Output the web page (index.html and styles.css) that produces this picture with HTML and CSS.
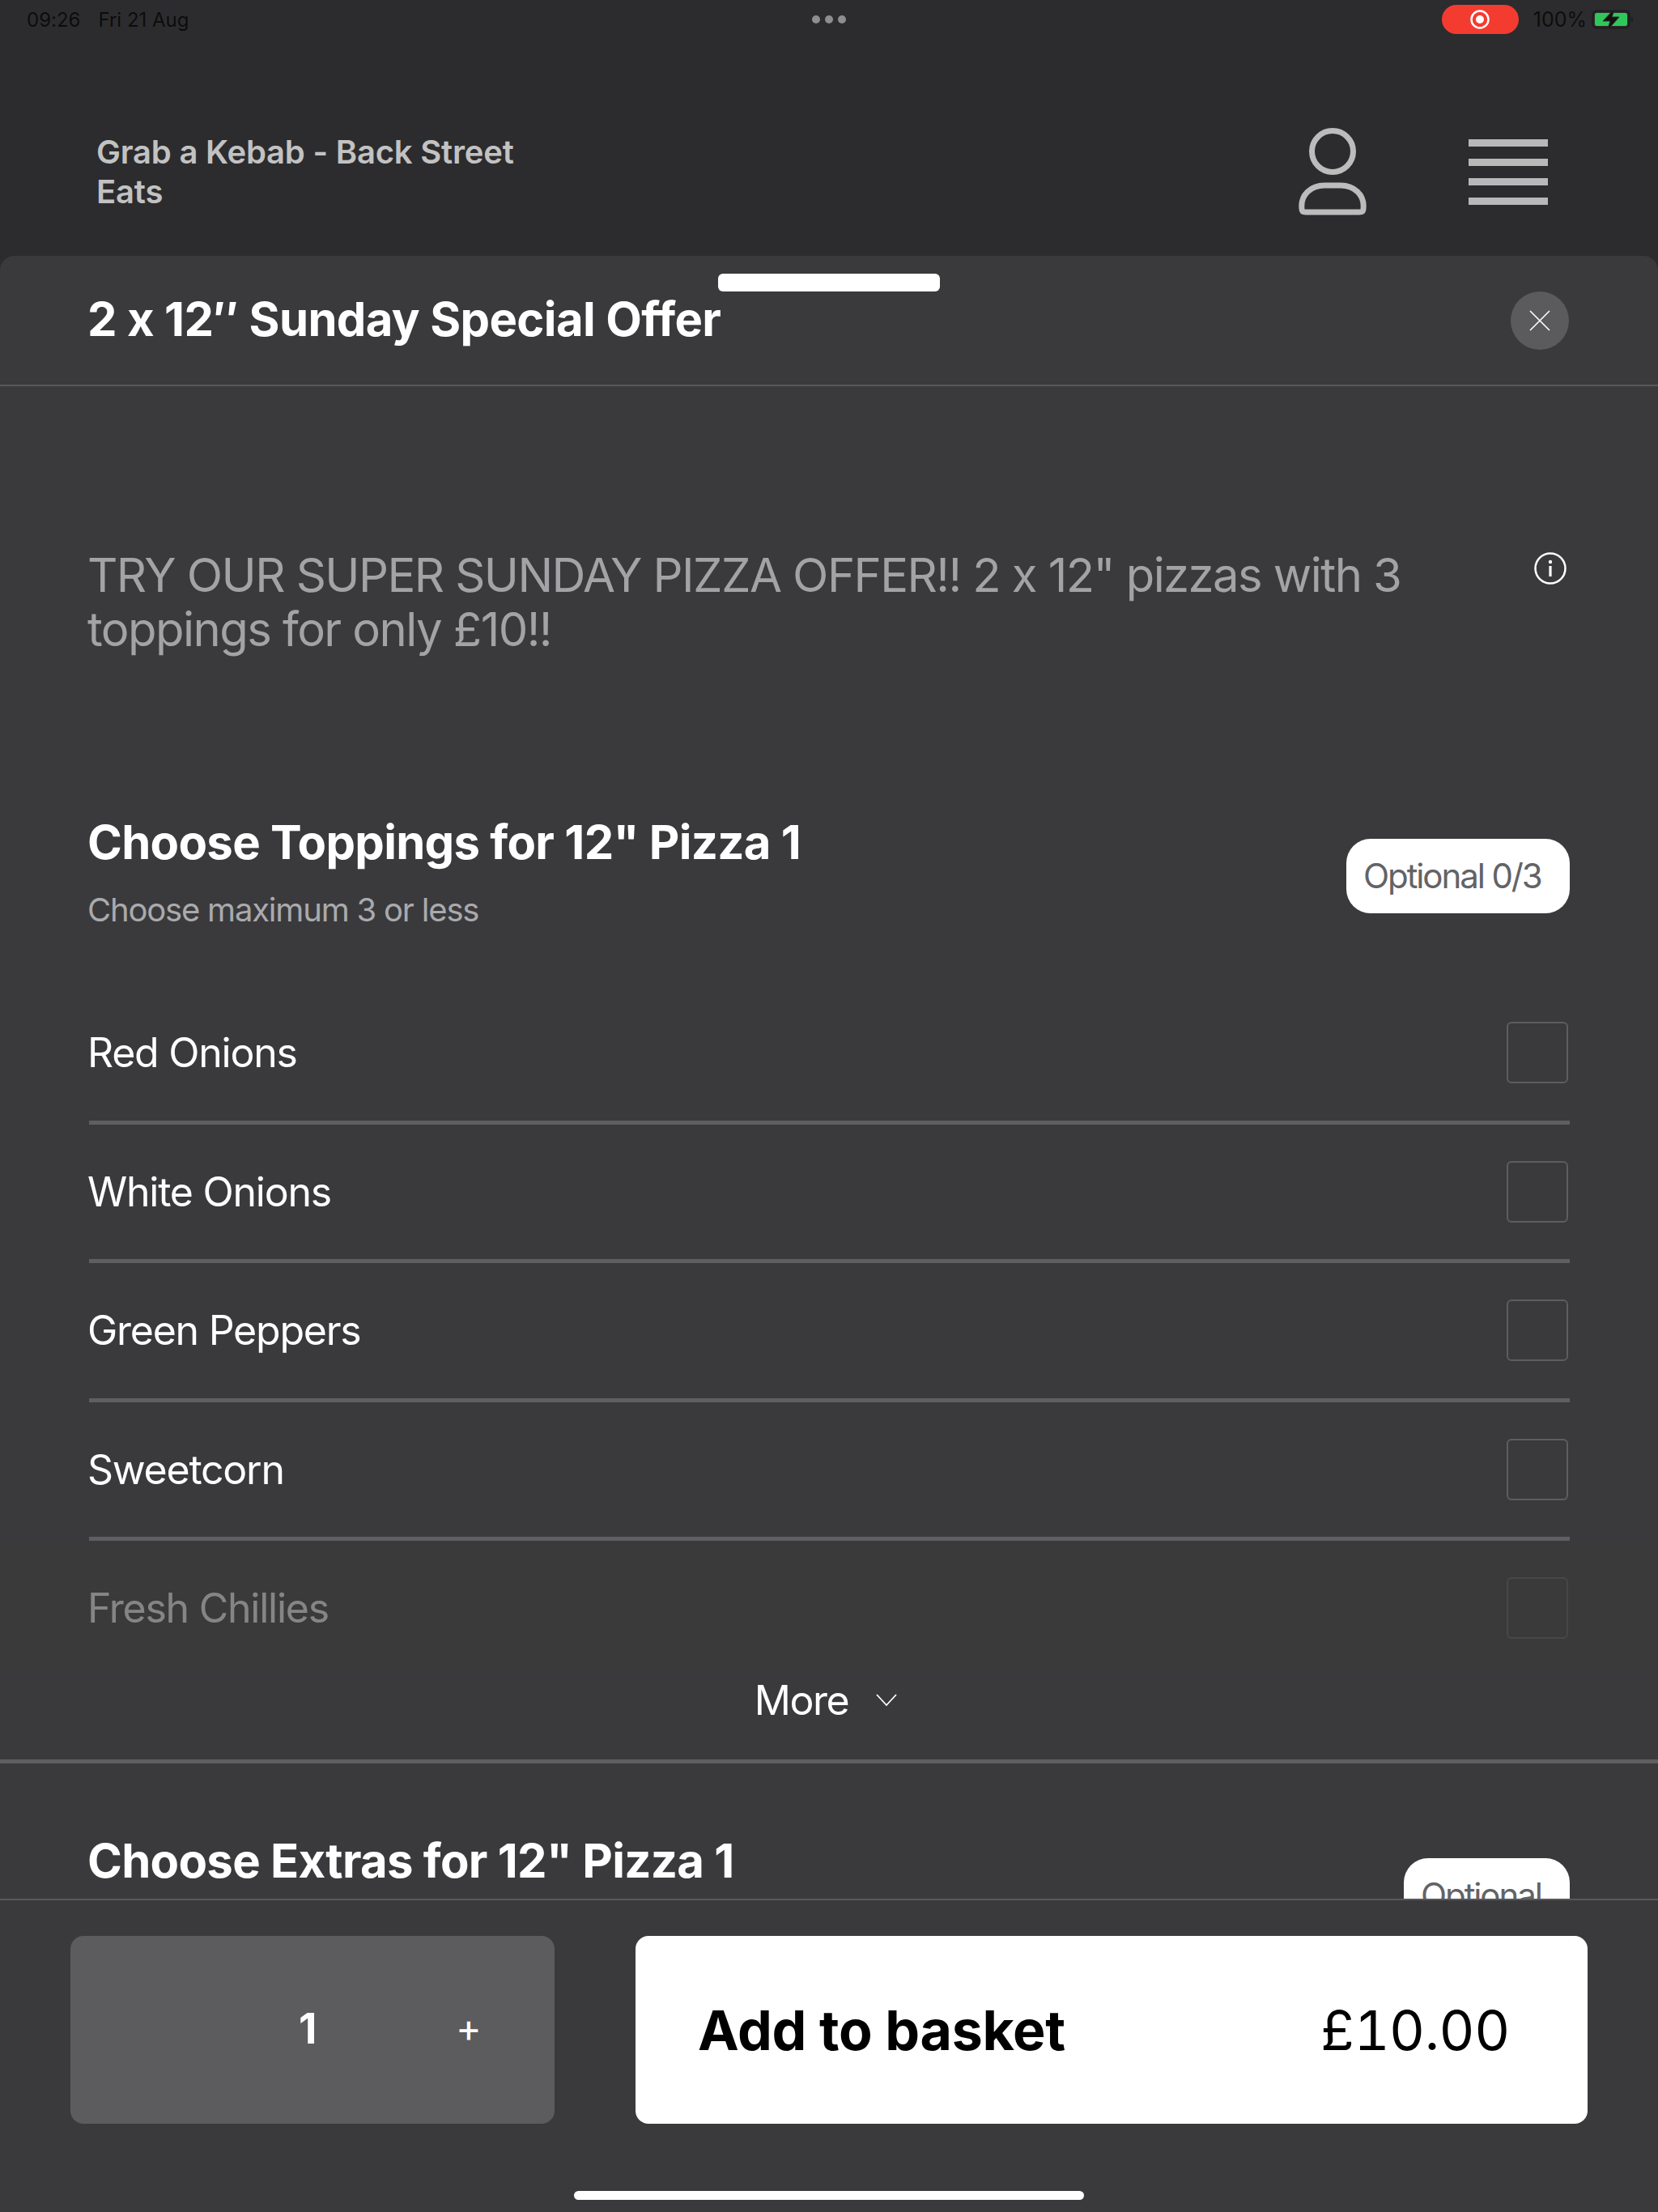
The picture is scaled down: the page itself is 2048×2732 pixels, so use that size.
FILE: index.html
```html
<!DOCTYPE html>
<html lang="en">
<head>
  <meta charset="UTF-8">
  <meta name="viewport" content="width=device-width,initial-scale=1.0">
  <title>2 x 12" Sunday Special Offer</title>
  <link rel="stylesheet" href="styles.css">
</head>
<body>
  <div class="page">
    <div class="statusBar">
      <div class="statusLeft"><span>09:26</span><span>Fri 21 Aug</span></div>
      <div class="statusDots"><i></i><i></i><i></i></div>
      <div class="statusRight">
        <div class="recPill"><svg width="26" height="26" viewBox="0 0 26 26"><circle cx="13" cy="13" r="10.5" fill="none" stroke="#fff" stroke-width="2.5"/><circle cx="13" cy="13" r="5" fill="#fff"/></svg></div>
        <span>100%</span>
        <svg width="54" height="30" viewBox="0 0 54 30"><rect x="1.5" y="4.5" width="45" height="21" rx="5" fill="none" stroke="#1f1f21" stroke-width="2.5"/><rect x="4" y="7" width="40" height="16" rx="2.5" fill="#30c75a"/><rect x="48.5" y="12" width="2.5" height="6" rx="1" fill="#1f1f21"/><path d="M29 1 L14 17 H23 L19 29 L34 12 H25 Z" fill="#111" stroke="#2c2c2e" stroke-width="1"/></svg>
      </div>
    </div>

    <header class="topBar">
      <div class="brand">Grab a Kebab - Back Street<br>Eats</div>
      <svg class="userIcon" width="84" height="108" viewBox="0 0 84 108"><ellipse cx="42" cy="29" rx="25.5" ry="25.5" fill="none" stroke="#bcbcbc" stroke-width="7"/><path d="M4 100 C2 82 16 71 32 71 H52 C68 71 82 82 80 100 C80 103 78 104 75 104 H9 C6 104 4 103 4 100 Z" fill="none" stroke="#bcbcbc" stroke-width="7"/></svg>
      <div class="menuIcon"><i></i><i></i><i></i><i></i></div>
    </header>

    <section class="sheet">
      <div class="grabber"></div>
      <div class="sheetHead">
        <h1>2 x 12&Prime; Sunday Special Offer</h1>
        <div class="closeBtn"><svg width="26" height="26" viewBox="0 0 26 26"><path d="M1 1 L25 25 M25 1 L1 25" stroke="#fff" stroke-width="1.6"/></svg></div>
      </div>

      <div class="sheetBody">
        <div class="intro">
          <p>TRY OUR SUPER SUNDAY PIZZA OFFER!! 2 x 12" pizzas with 3 toppings for only &pound;10!!</p>
          <svg class="infoIcon" width="40" height="40" viewBox="0 0 40 40"><circle cx="20" cy="20" r="18.5" fill="none" stroke="#fff" stroke-width="2.5"/><circle cx="20" cy="12" r="2.2" fill="#fff"/><rect x="18.4" y="17" width="3.2" height="13" fill="#fff"/></svg>
        </div>

        <div class="group">
          <div class="groupHead">
            <div>
              <h2>Choose Toppings for 12" Pizza 1</h2>
              <div class="hint">Choose maximum 3 or less</div>
            </div>
            <div class="pill">Optional 0/3</div>
          </div>
          <div class="options">
            <div class="option"><span>Red Onions</span><div class="check"></div></div>
            <div class="option"><span>White Onions</span><div class="check"></div></div>
            <div class="option"><span>Green Peppers</span><div class="check"></div></div>
            <div class="option"><span>Sweetcorn</span><div class="check"></div></div>
            <div class="option"><span>Fresh Chillies</span><div class="check"></div></div>
            <div class="fade"></div>
          </div>
          <div class="moreBtn">More <svg width="26" height="16" viewBox="0 0 26 16"><path d="M1 1 L13 14 L25 1" fill="none" stroke="#fff" stroke-width="1.8"/></svg></div>
        </div>

        <div class="group nextGroup">
          <div class="groupHead">
            <h2>Choose Extras for 12" Pizza 1</h2>
            <div class="pill pillShort">Optional</div>
          </div>
        </div>
      </div>

      <div class="sheetFoot">
        <div class="qtyBox"><span class="qtyNum">1</span><span class="qtyPlus">+</span></div>
        <div class="addBtn"><b>Add to basket</b><span>&pound;10.00</span></div>
      </div>
      <div class="homeBar"></div>
    </section>
  </div>
</body>
</html>
```

FILE: styles.css
```css
*
{
  box-sizing:border-box;
}
body
{
  margin:0;
  font-family:Inter,"Noto Sans",sans-serif;
  font-feature-settings:"calt" 0;
  background-color:#2c2c2e;
  color:#fff;
}
h1,h2,p
{
  margin:0;
}
.page
{
  display:flex;
  flex-direction:column;
  height:2732px;
  overflow:hidden;
}
.statusBar
{
  display:grid;
  grid-template-columns:1fr auto 1fr;
  align-items:center;
  height:48px;
  padding:0 28px;
  font-size:25px;
  color:#0c0c0c;
}
.statusLeft
{
  display:flex;
  gap:22px;
  padding-left:5px;
  font-size:24px;
}
.statusDots
{
  display:flex;
  gap:6px;
}
.statusDots i
{
  width:10px;
  height:10px;
  border-radius:50%;
  background-color:#8e8e90;
}
.statusRight
{
  display:flex;
  align-items:center;
  justify-content:flex-end;
  gap:6px;
}
.recPill
{
  display:flex;
  align-items:center;
  justify-content:center;
  width:95px;
  height:36px;
  margin-right:12px;
  border-radius:18px;
  background-color:#f43b30;
}
.topBar
{
  display:flex;
  align-items:center;
  height:268px;
  padding:60px 136px 0 119px;
}
.brand
{
  flex:1;
  font-size:40px;
  font-weight:600;
  line-height:49px;
  letter-spacing:-0.005em;
  color:#c2c2c2;
}
.userIcon
{
  margin-right:126px;
}
.menuIcon
{
  display:flex;
  flex-direction:column;
  gap:15px;
  width:98px;
}
.menuIcon i
{
  height:9px;
  background-color:#b8b8b8;
}
.sheet
{
  position:relative;
  flex:1;
  display:flex;
  flex-direction:column;
  min-height:0;
  background-color:#3a3a3c;
  border-radius:18px 18px 0 0;
}
.grabber
{
  position:absolute;
  top:22px;
  left:887px;
  width:274px;
  height:22px;
  border-radius:6px;
  background-color:#fff;
}
.sheetHead
{
  display:flex;
  align-items:center;
  justify-content:space-between;
  height:161px;
  padding:0 110px 0 108px;
  border-bottom:2px solid #58585a;
}
.sheetHead h1
{
  margin-bottom:3px;
  font-size:58px;
  font-weight:700;
  letter-spacing:-0.011em;
}
.closeBtn
{
  display:flex;
  align-items:center;
  justify-content:center;
  width:72px;
  height:72px;
  border-radius:50%;
  background-color:#5b5b5d;
}
.sheetBody
{
  flex:1;
  min-height:0;
  overflow:hidden;
}
.intro
{
  display:flex;
  justify-content:space-between;
  align-items:flex-start;
  padding:200px 113px 0 108px;
}
.intro p
{
  width:1690px;
  font-size:58px;
  line-height:67px;
  letter-spacing:-0.027em;
  color:#a3a3a6;
}
.infoIcon
{
  margin-top:5px;
}
.group
{
  padding-top:195px;
}
.groupHead
{
  display:flex;
  justify-content:space-between;
  align-items:center;
  padding:0 109px 0 108px;
}
h2
{
  font-size:58px;
  font-weight:700;
  line-height:68px;
  letter-spacing:-0.012em;
}
.hint
{
  margin-top:26px;
  font-size:40px;
  line-height:48px;
  letter-spacing:-0.03em;
  color:#aaaaad;
}
.pill
{
  width:276px;
  height:92px;
  margin-top:9px;
  padding-left:21px;
  border-radius:30px;
  background-color:#fff;
  color:#636366;
  font-size:42px;
  line-height:92px;
  letter-spacing:-0.05em;
}
.pillShort
{
  width:205px;
  margin-top:31px;
}
.options
{
  position:relative;
  margin-top:69px;
  height:851px;
  padding:0 109px 0 110px;
  overflow:hidden;
}
.option
{
  display:flex;
  align-items:center;
  justify-content:space-between;
  height:171.5px;
  padding:0 2px 0 0;
  border-bottom:5px solid #5f5f61;
  font-size:50px;
  letter-spacing:-0.025em;
}
.option span
{
  margin-left:-2px;
}
.option:last-of-type
{
  border-bottom:none;
}
.check
{
  width:76px;
  height:76px;
  border:2px solid #5d5d5f;
  border-radius:6px;
}
.fade
{
  position:absolute;
  left:0;
  right:0;
  bottom:0;
  height:165px;
  background:rgba(58,58,60,0.62);
}
.moreBtn
{
  display:flex;
  align-items:center;
  justify-content:center;
  gap:34px;
  height:110px;
  padding:0 8px 42px 0;
  border-bottom:5px solid #5f5f61;
  font-size:50px;
  letter-spacing:-0.03em;
}
.nextGroup
{
  padding-top:86px;
}
.nextGroup .groupHead
{
  align-items:flex-start;
}
.sheetFoot
{
  flex:none;
  display:flex;
  justify-content:space-between;
  height:387px;
  padding:44px 87px 0 87px;
  border-top:2px solid #58585a;
  background-color:#3a3a3c;
}
.qtyBox
{
  position:relative;
  width:598px;
  height:232px;
  border-radius:16px;
  background-color:#5c5c5e;
}
.qtyNum
{
  position:absolute;
  left:282px;
  top:83px;
  font-size:52px;
  font-weight:700;
}
.qtyPlus
{
  position:absolute;
  left:476px;
  top:84px;
  font-size:48px;
}
.addBtn
{
  display:flex;
  align-items:center;
  justify-content:space-between;
  width:1176px;
  height:232px;
  padding:0 96px 0 77px;
  border-radius:16px;
  background-color:#fff;
  color:#000;
}
.addBtn b
{
  font-size:68px;
  font-weight:700;
  letter-spacing:-0.004em;
}
.addBtn span
{
  font-size:68px;
  letter-spacing:-0.006em;
  font-feature-settings:"tnum" 1,"calt" 0;
}
.homeBar
{
  position:absolute;
  left:709px;
  bottom:15px;
  width:630px;
  height:11px;
  border-radius:6px;
  background-color:#fff;
}
```
